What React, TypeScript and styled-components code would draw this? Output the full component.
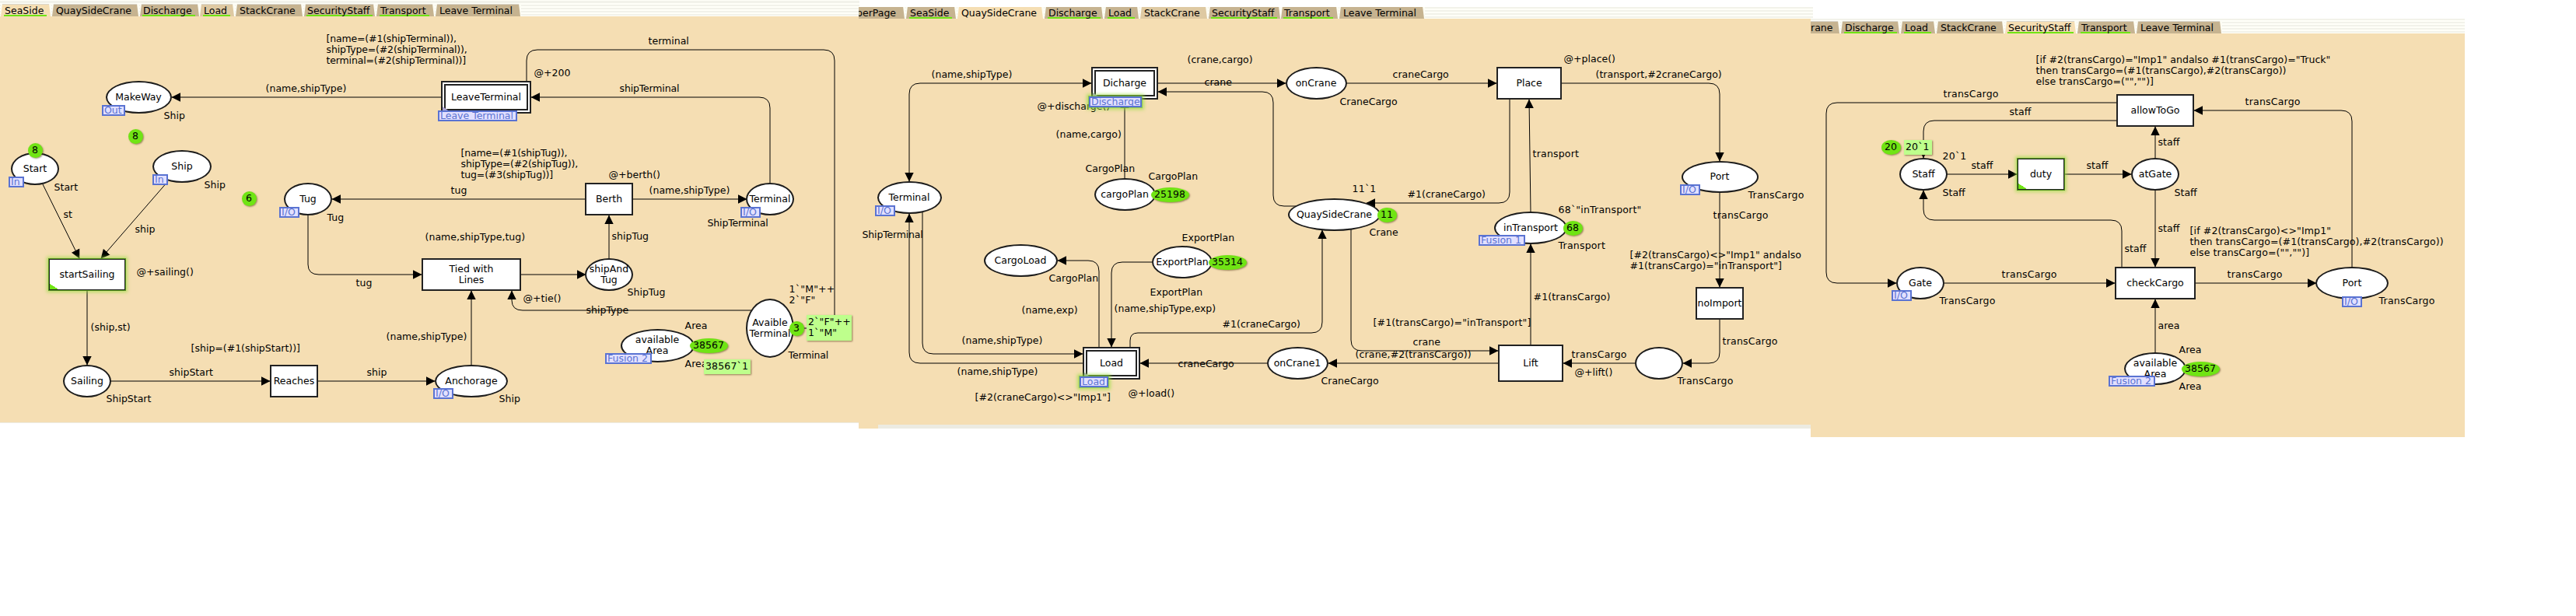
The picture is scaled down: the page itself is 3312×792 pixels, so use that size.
import React from 'react';
import styled, { createGlobalStyle, css } from 'styled-components';

const WHEAT = '#f5deb3';
const LIME = '#70e414';
const BLUE = '#5a73d2';

const GlobalStyle = createGlobalStyle`
  body { margin: 0; background: #fff; }
  * { box-sizing: border-box; }
`;

const Desktop = styled.main`
  display: flex;
  align-items: flex-start;
  width: 3312px;
  height: 792px;
  overflow: hidden;
  background: #fff;
  font: 12.5px/14px 'DejaVu Sans', Verdana, sans-serif;
  color: #000;
`;

const Binder = styled.section<{ $w: number; $drop: number }>`
  flex: none;
  width: ${p => p.$w}px;
  margin-top: ${p => p.$drop}px;
`;

const TabStrip = styled.nav<{ $h: number; $shift: number; $overhang: number }>`
  display: flex;
  align-items: flex-end;
  position: relative;
  z-index: 1;
  height: ${p => p.$h}px;
  margin-right: -${p => p.$overhang}px;
  overflow: hidden;
  background: repeating-linear-gradient(#f2f2ea 0 2px, #fffff8 2px 4px) 0 ${p => p.$shift}px;
`;

type Tone = 'idle' | 'soft' | 'active';
const toneFill = { idle: '#c6b390', soft: '#dec9a2', active: WHEAT };

const TabFrame = styled.div<{ $w: number; $lead: number }>`
  flex: none;
  width: ${p => p.$w}px;
  height: 16px;
  margin-left: ${p => p.$lead}px;
  background: #fdfdf4;
`;

const TabFace = styled.div<{ $tone: Tone; $pad: number; $cut: number }>`
  display: flex;
  align-items: flex-end;
  height: 16px;
  margin-right: 1px;
  padding-left: ${p => p.$pad}px;
  background: ${p => toneFill[p.$tone]};
  border-top: 1px solid #d9d6cb;
  clip-path: polygon(${p => (p.$cut ? 0 : 2)}px 0, calc(100% - 2px) 0, 100% 100%, 0 100%);
`;

const TabText = styled.span<{ $marked: boolean; $cut: number }>`
  height: 15px;
  padding: 0 4px 0 1px;
  margin-left: -${p => p.$cut}px;
  white-space: pre;
  line-height: 15px;
  border-bottom: 2px solid ${p => (p.$marked ? LIME : 'transparent')};
`;

const Canvas = styled.div<{ $h: number }>`
  position: relative;
  height: ${p => p.$h}px;
  overflow: hidden;
  background: ${WHEAT};
`;

const Sheet = styled.div<{ $ox: number; $oy: number }>`
  position: absolute;
  left: -${p => p.$ox}px;
  top: -${p => p.$oy}px;
  width: 3312px;
  height: 600px;
`;

const ArcLayer = styled.svg`
  position: absolute;
  inset: 0;
  width: 3312px;
  height: 600px;
  path.arc { fill: none; stroke: #000; stroke-width: 1px; }
`;

type BoxProps = { $x: number; $y: number; $w: number; $h: number };
const centred = css<BoxProps>`
  position: absolute;
  left: ${p => p.$x - p.$w / 2}px;
  top: ${p => p.$y - p.$h / 2}px;
  width: ${p => p.$w}px;
  height: ${p => p.$h}px;
  display: flex;
  align-items: center;
  justify-content: center;
  text-align: center;
  white-space: pre;
`;

const Place = styled.div<BoxProps>`
  ${centred}
  background: #fff;
  border: 2px solid #1c1c1c;
  border-radius: 50%;
`;

const Transition = styled.div<BoxProps & { $enabled?: boolean }>`
  ${centred}
  background: #fff;
  border: 2px solid #222;
  ${p => p.$enabled && css`
    border-width: 1px;
    background: linear-gradient(to top right, ${LIME} 0 50%, transparent 51%) 0 100% / 11px 7px no-repeat #fff;
    box-shadow: 0 0 0 1px rgba(66, 134, 16, 0.85), 0 0 4px 3px rgba(150, 222, 60, 0.6);
  `}
`;

const Substitution = styled(Transition)`
  &::before {
    content: '';
    position: absolute;
    inset: 2px;
    border: 2px solid #222;
  }
  &::after {
    content: '';
    position: absolute;
    left: 0;
    bottom: 0;
    width: 10px;
    height: 7px;
    background: #aca4d4;
    clip-path: polygon(0 0, 100% 100%, 0 100%);
  }
`;

const Tag = styled.div<{ $x: number; $y: number; $w: number; $glow?: boolean }>`
  position: absolute;
  left: ${p => p.$x}px;
  top: ${p => p.$y}px;
  width: ${p => p.$w}px;
  height: 14px;
  padding-left: 1px;
  line-height: 9px;
  white-space: pre;
  color: ${BLUE};
  background: #e2e0ff;
  border: 2px solid ${BLUE};
  ${p => p.$glow && css`
    box-shadow: 0 0 0 1px rgba(100, 180, 60, 0.55), 0 0 4px 3px rgba(150, 222, 60, 0.65);
  `}
`;

const Token = styled.div<BoxProps>`
  ${centred}
  background: ${LIME};
  border-radius: 50%;
  box-shadow: 1px 1px 2px rgba(80, 60, 20, 0.55);
`;

const Marking = styled.div<{ $x: number; $y: number; $w: number }>`
  position: absolute;
  left: ${p => p.$x}px;
  top: ${p => p.$y}px;
  width: ${p => p.$w}px;
  padding: 2px 0 3px 2px;
  white-space: pre;
  letter-spacing: 0.15px;
  background: #beff8c;
  box-shadow: 1px 1px 2px rgba(80, 60, 20, 0.6);
`;

const Label = styled.span<{ $x: number; $y: number; $tracking: number }>`
  position: absolute;
  left: ${p => p.$x - 0.4}px;
  top: ${p => p.$y - 7}px;
  white-space: pre;
  letter-spacing: ${p => p.$tracking}px;
`;

const trackingOf = (text: string) => {
  if (/Terminal|#\d\(ship(?!Start)/.test(text)) return -0.17;
  if (/^(transCargo|TransCargo|transport|Transport)$|`/.test(text)) return 0.2;
  if (/andalso/.test(text)) return 0.04;
  if (/transCargo/.test(text)) return 0.13;
  return 0;
};

const BottomEdge = styled.div<{ $h: number; $indent: number; $fill: string }>`
  height: ${p => p.$h}px;
  padding-left: ${p => p.$indent}px;
  background: ${WHEAT};
  &::before { content: ''; display: block; height: 100%; background: ${p => p.$fill}; }
`;

type Box = [string, number, number, number, number];
interface Net {
  width: number;
  drop: number;
  strip: number;
  shift: number;
  overhang: number;
  height: number;
  origin: [number, number];
  edge: { h: number; indent: number; fill: string } | null;
  tabs: { text: string; lead: number; w: number; pad: number; marked?: boolean; tone?: Tone; cut?: number }[];
  arcs: { d: string; both?: boolean }[];
  places: Box[];
  transitions: Box[];
  enabled: Box[];
  substitutions: Box[];
  tags: [string, number, number, number, boolean?][];
  tokens: [string, number, number, number][];
  markings: [string, number, number, number][];
  labels: [string, number, number][];
}

const seaSide: Net = {
  width: 1104, drop: 0, strip: 21, shift: 2, overhang: 1, height: 522, origin: [0, 21],
  edge: { h: 1, indent: 0, fill: '#ecebe2' },
  tabs: [
    { text: 'SeaSide', lead: 1, w: 65, pad: 4, marked: true, tone: 'active' },
    { text: 'QuaySideCrane', lead: 1, w: 112, pad: 4 },
    { text: 'Discharge', lead: 1, w: 77, pad: 3, marked: true },
    { text: 'Load', lead: 0, w: 45, pad: 4, marked: true, tone: 'soft' },
    { text: 'StackCrane', lead: 1, w: 87, pad: 4 },
    { text: 'SecurityStaff', lead: 1, w: 92, pad: 3, marked: true },
    { text: 'Transport', lead: 1, w: 75, pad: 4, marked: true },
    { text: 'Leave Terminal', lead: 1, w: 110, pad: 4 },
  ],
  arcs: [
    { d: 'M567 125H221' },
    { d: 'M55 237L102 332' },
    { d: 'M216 233L130 332' },
    { d: 'M112 374V469' },
    { d: 'M142 490H347' },
    { d: 'M409 490H559' },
    { d: 'M606 469V374' },
    { d: 'M396 276V340Q396 353 410 353H542' },
    { d: 'M670 353H753' },
    { d: 'M783 332V277' },
    { d: 'M752 256H427' },
    { d: 'M814 256H960' },
    { d: 'M990 235V139Q990 125 976 125H683' },
    { d: 'M677 104V78Q677 64 691 64H1059Q1073 64 1073 78V408Q1073 422 1059 422H1021' },
    { d: 'M968 399H672Q658 399 658 386V374' },
  ],
  places: [
    ['MakeWay', 178, 125, 85, 42],
    ['Start', 45, 217, 62, 42],
    ['Ship', 234, 214, 76, 42],
    ['Tug', 396, 256, 62, 42],
    ['Sailing', 112, 490, 62, 42],
    ['Anchorage', 606, 490, 94, 42],
    ['shipAnd\nTug', 783, 353, 62, 42],
    ['Terminal', 990, 256, 62, 42],
    ['Avaible\nTerminal', 990, 422, 62, 76],
    ['available\nArea', 845, 444, 95, 43],
  ],
  transitions: [
    ['Reaches', 378, 490, 62, 42],
    ['Tied with\nLines', 606, 353, 128, 42],
    ['Berth', 783, 256, 62, 42],
  ],
  enabled: [['startSailing', 112, 353, 98, 40]],
  substitutions: [['LeaveTerminal', 625, 125, 116, 42]],
  tags: [
    ['Out', 131, 135, 30],
    ['In', 11, 227, 20],
    ['In', 196, 224, 20],
    ['I/O', 359, 266, 26],
    ['I/O', 557, 499, 26],
    ['I/O', 952, 266, 26],
    ['Leave Terminal', 563, 142, 102],
    ['Fusion 2', 778, 454, 60],
  ],
  tokens: [
    ['8', 174, 175, 19],
    ['8', 45, 193, 19],
    ['6', 320, 255, 19],
    ['3', 1024, 422, 19],
    ['38567', 911, 444, 49],
  ],
  markings: [
    ['2`"F"++\n1`"M"', 1037, 405, 58],
    ['38567`1', 905, 462, 60],
  ],
  labels: [
    ['[name=(#1(shipTerminal)),\nshipType=(#2(shipTerminal)),\nterminal=(#2(shipTerminal))]', 420, 50],
    ['(name,shipType)', 342, 114],
    ['Ship', 211, 149],
    ['Start', 70, 241],
    ['Ship', 263, 238],
    ['Tug', 421, 280],
    ['st', 82, 276],
    ['ship', 174, 295],
    ['@+sailing()', 176, 350],
    ['(ship,st)', 117, 421],
    ['ShipStart', 137, 513],
    ['[ship=(#1(shipStart))]', 246, 448],
    ['shipStart', 218, 479],
    ['ship', 472, 479],
    ['Ship', 642, 513],
    ['(name,shipType)', 497, 433],
    ['tug', 458, 364],
    ['(name,shipType,tug)', 547, 305],
    ['shipTug', 787, 304],
    ['@+berth()', 783, 225],
    ['[name=(#1(shipTug)),\nshipType=(#2(shipTug)),\ntug=(#3(shipTug))]', 593, 197],
    ['tug', 580, 245],
    ['(name,shipType)', 835, 245],
    ['ShipTerminal', 910, 287],
    ['shipTerminal', 797, 114],
    ['@+200', 687, 94],
    ['terminal', 834, 53],
    ['@+tie()', 673, 384],
    ['shipType', 754, 399],
    ['ShipTug', 807, 376],
    ['1`"M"++\n2`"F"', 1015, 372],
    ['Terminal', 1014, 457],
    ['Area', 881, 419],
    ['Area', 881, 468],
  ],
};

const quaySide: Net = {
  width: 1224, drop: 9, strip: 15, shift: 0, overhang: 3, height: 522, origin: [1104, 24],
  edge: { h: 5, indent: 25, fill: '#ecebe2' },
  tabs: [
    { text: 'perPage', lead: 0, w: 60, pad: 0, cut: 4 },
    { text: 'SeaSide', lead: 1, w: 65, pad: 4, marked: true },
    { text: 'QuaySideCrane', lead: 1, w: 111, pad: 4, tone: 'active' },
    { text: 'Discharge', lead: 1, w: 76, pad: 4, marked: true },
    { text: 'Load', lead: 1, w: 45, pad: 4, marked: true },
    { text: 'StackCrane', lead: 1, w: 87, pad: 4, tone: 'soft' },
    { text: 'SecurityStaff', lead: 1, w: 93, pad: 3, marked: true },
    { text: 'Transport', lead: 0, w: 74, pad: 3, marked: true },
    { text: 'Leave Terminal', lead: 1, w: 110, pad: 4 },
  ],
  arcs: [
    { d: 'M1169 233V121Q1169 107 1183 107H1403', both: true },
    { d: 'M1489 107H1653' },
    { d: 'M1668 265H1651Q1637 265 1637 251V132Q1637 118 1623 118H1489' },
    { d: 'M1446 229V128' },
    { d: 'M1731 107H1924' },
    { d: 'M2008 107H2197Q2211 107 2211 121V207' },
    { d: 'M1968 273L1966 128' },
    { d: 'M1941 128V247Q1941 261 1927 261H1757' },
    { d: 'M1392 467H1183Q1169 467 1169 453V275' },
    { d: 'M1186 272V441Q1186 455 1200 455H1392' },
    { d: 'M1413 446V349Q1413 335 1399 335H1360' },
    { d: 'M1481 337H1443Q1429 337 1429 351V446' },
    { d: 'M1453 446V438Q1453 428 1463 428H1686Q1700 428 1700 414V296' },
    { d: 'M1629 467H1466' },
    { d: 'M1926 467H1708' },
    { d: 'M1737 294V437Q1737 451 1751 451H1926' },
    { d: 'M1968 443V314' },
    { d: 'M2211 247V369' },
    { d: 'M2211 411V453Q2211 467 2197 467H2164' },
    { d: 'M2102 467H2010' },
  ],
  places: [
    ['Terminal', 1169, 254, 83, 42],
    ['onCrane', 1692, 107, 79, 42],
    ['Port', 2211, 227, 99, 41],
    ['QuaySideCrane', 1715.5, 276, 119, 42],
    ['cargoPlan', 1446, 250, 79, 42],
    ['CargoLoad', 1312, 335, 95, 42],
    ['ExportPlan', 1520, 337, 78, 42],
    ['onCrane1', 1668, 467, 79, 42],
    ['inTransport', 1968, 293, 94, 42],
    ['', 2133, 467, 62, 42],
  ],
  transitions: [
    ['Place', 1966, 107, 84, 42],
    ['Lift', 1968, 467, 84, 48],
    ['noImport', 2211, 390, 62, 42],
  ],
  enabled: [],
  substitutions: [
    ['Dicharge', 1446, 107, 86, 42],
    ['Load', 1429, 467, 74, 42],
  ],
  tags: [
    ['Discharge', 1400, 124, 68, true],
    ['Load', 1388, 484, 37, true],
    ['I/O', 1125, 264, 26],
    ['I/O', 2160, 237, 26],
    ['Fusion 1', 1901, 302, 60],
  ],
  tokens: [
    ['25198', 1504, 250, 49],
    ['35314', 1578, 337, 49],
    ['11', 1783, 276, 25],
    ['68', 2022, 293, 25],
  ],
  markings: [],
  labels: [
    ['(name,shipType)', 1198, 96],
    ['@+discharge()', 1334, 137],
    ['(name,cargo)', 1358, 173],
    ['(crane,cargo)', 1527, 77],
    ['crane', 1549, 106],
    ['craneCargo', 1791, 96],
    ['CraneCargo', 1723, 131],
    ['@+place()', 2011, 76],
    ['(transport,#2craneCargo)', 2052, 96],
    ['TransCargo', 2248, 251],
    ['transCargo', 2203, 277],
    ['transport', 1971, 198],
    ['#1(craneCargo)', 1810, 250],
    ['11`1', 1739, 243],
    ['Crane', 1761, 299],
    ['CargoPlan', 1396, 217],
    ['CargoPlan', 1477, 227],
    ['ShipTerminal', 1109, 302],
    ['CargoPlan', 1349, 358],
    ['ExportPlan', 1520, 306],
    ['ExportPlan', 1479, 376],
    ['(name,exp)', 1314, 399],
    ['(name,shipType,exp)', 1433, 397],
    ['#1(craneCargo)', 1572, 417],
    ['(name,shipType)', 1237, 438],
    ['(name,shipType)', 1231, 478],
    ['[#2(craneCargo)<>"Imp1"]', 1254, 511],
    ['@+load()', 1451, 506],
    ['craneCargo', 1515, 468],
    ['CraneCargo', 1699, 490],
    ['crane', 1817, 440],
    ['(crane,#2(transCargo))', 1743, 456],
    ['[#1(transCargo)="inTransport"]', 1766, 415],
    ['68`"inTransport"', 2004, 270],
    ['Transport', 2004, 316],
    ['#1(transCargo)', 1972, 382],
    ['[#2(transCargo)<>"Imp1" andalso\n#1(transCargo)="inTransport"]', 2096, 328],
    ['transCargo', 2215, 439],
    ['TransCargo', 2157, 490],
    ['transCargo', 2021, 456],
    ['@+lift()', 2025, 479],
  ],
};

const security: Net = {
  width: 841, drop: 24, strip: 19, shift: 0, overhang: 0, height: 519, origin: [2328, 43],
  edge: null,
  tabs: [
    { text: 'rane', lead: 0, w: 38, pad: 0, cut: 1 },
    { text: 'Discharge', lead: 1, w: 76, pad: 4, marked: true },
    { text: 'Load', lead: 1, w: 45, pad: 4, marked: true },
    { text: 'StackCrane', lead: 1, w: 87, pad: 4 },
    { text: 'SecurityStaff', lead: 1, w: 92, pad: 3, marked: true, tone: 'active' },
    { text: 'Transport', lead: 1, w: 75, pad: 4, marked: true },
    { text: 'Leave Terminal', lead: 1, w: 110, pad: 4 },
  ],
  arcs: [
    { d: 'M2721 132H2362Q2348 132 2348 146V350Q2348 364 2362 364H2438' },
    { d: 'M2721 155H2487Q2473 155 2473 169V203' },
    { d: 'M2503 224H2593' },
    { d: 'M2655 224H2740' },
    { d: 'M2771 203V163' },
    { d: 'M2771 245V343' },
    { d: 'M3024 343V156Q3024 142 3010 142H2821' },
    { d: 'M2728 343V297Q2728 283 2714 283H2487Q2473 283 2473 269V245' },
    { d: 'M2500 364H2719' },
    { d: 'M2823 364H2978' },
    { d: 'M2771 453V385' },
  ],
  places: [
    ['Staff', 2473, 224, 62, 42],
    ['atGate', 2771, 224, 62, 42],
    ['Gate', 2469, 364, 62, 42],
    ['Port', 3024, 364, 94, 42],
    ['available\nArea', 2771, 474, 80, 42],
  ],
  transitions: [
    ['allowToGo', 2771, 142, 100, 42],
    ['checkCargo', 2771, 364, 104, 42],
  ],
  enabled: [['duty', 2624, 224, 60, 40]],
  substitutions: [],
  tags: [
    ['I/O', 2432, 373, 26],
    ['I/O', 3011, 381, 26],
    ['Fusion 2', 2711, 483, 60],
  ],
  tokens: [
    ['20', 2431, 189, 25],
    ['38567', 2829, 474, 49],
  ],
  markings: [['20`1', 2448, 180, 36]],
  labels: [
    ['[if #2(transCargo)="Imp1" andalso #1(transCargo)="Truck"\nthen transCargo=(#1(transCargo),#2(transCargo))\nelse transCargo=("","")]', 2618, 77],
    ['transCargo', 2499, 121],
    ['staff', 2584, 144],
    ['20`1', 2498, 201],
    ['Staff', 2498, 248],
    ['staff', 2535, 213],
    ['staff', 2683, 213],
    ['staff', 2775, 183],
    ['staff', 2775, 294],
    ['Staff', 2796, 248],
    ['transCargo', 2887, 131],
    ['staff', 2732, 320],
    ['TransCargo', 2494, 387],
    ['transCargo', 2574, 353],
    ['[if #2(transCargo)<>"Imp1"\nthen transCargo=(#1(transCargo),#2(transCargo))\nelse transCargo=("","")]', 2816, 297],
    ['transCargo', 2864, 353],
    ['TransCargo', 3059, 387],
    ['area', 2775, 419],
    ['Area', 2802, 450],
    ['Area', 2802, 497],
  ],
};

const box = ([, x, y, w, h]: Box) => ({ $x: x, $y: y, $w: w, $h: h });

function NetBinder({ net, id }: { net: Net; id: string }) {
  return (
    <Binder $w={net.width} $drop={net.drop}>
      <TabStrip $h={net.strip} $shift={net.shift} $overhang={net.overhang}>
        {net.tabs.map(t => (
          <TabFrame key={t.text} $w={t.w} $lead={t.lead}>
            <TabFace $tone={t.tone ?? 'idle'} $pad={t.pad} $cut={t.cut ?? 0}>
              <TabText $marked={!!t.marked} $cut={t.cut ?? 0}>{t.text}</TabText>
            </TabFace>
          </TabFrame>
        ))}
      </TabStrip>
      <Canvas $h={net.height}>
        <Sheet $ox={net.origin[0]} $oy={net.origin[1]}>
          <ArcLayer>
            <defs>
              <marker id={id} markerUnits="userSpaceOnUse" markerWidth="12" markerHeight="12" refX="11" refY="6" orient="auto-start-reverse">
                <path d="M0 0.3L11.5 6L0 11.7Z" />
              </marker>
            </defs>
            {net.arcs.map(a => (
              <path key={a.d} className="arc" d={a.d} markerEnd={`url(#${id})`} markerStart={a.both ? `url(#${id})` : undefined} />
            ))}
          </ArcLayer>
          {net.places.map(b => <Place key={b.join()} {...box(b)}>{b[0]}</Place>)}
          {net.transitions.map(b => <Transition key={b.join()} {...box(b)}>{b[0]}</Transition>)}
          {net.enabled.map(b => <Transition key={b.join()} {...box(b)} $enabled>{b[0]}</Transition>)}
          {net.substitutions.map(b => <Substitution key={b.join()} {...box(b)}>{b[0]}</Substitution>)}
          {net.labels.map(([text, x, y]) => <Label key={`${x},${y}`} $x={x} $y={y} $tracking={trackingOf(text)}>{text}</Label>)}
          {net.tags.map(([text, x, y, w, glow]) => <Tag key={`${x},${y}`} $x={x} $y={y} $w={w} $glow={glow}>{text}</Tag>)}
          {net.tokens.map(([text, x, y, w]) => <Token key={`${x},${y}`} $x={x} $y={y} $w={w} $h={19}>{text}</Token>)}
          {net.markings.map(([text, x, y, w]) => <Marking key={`${x},${y}`} $x={x} $y={y} $w={w}>{text}</Marking>)}
        </Sheet>
      </Canvas>
      {net.edge && <BottomEdge $h={net.edge.h} $indent={net.edge.indent} $fill={net.edge.fill} />}
    </Binder>
  );
}

export default function App() {
  return (
    <>
      <GlobalStyle />
      <Desktop>
        <NetBinder net={seaSide} id="tip-sea" />
        <NetBinder net={quaySide} id="tip-quay" />
        <NetBinder net={security} id="tip-security" />
      </Desktop>
    </>
  );
}
